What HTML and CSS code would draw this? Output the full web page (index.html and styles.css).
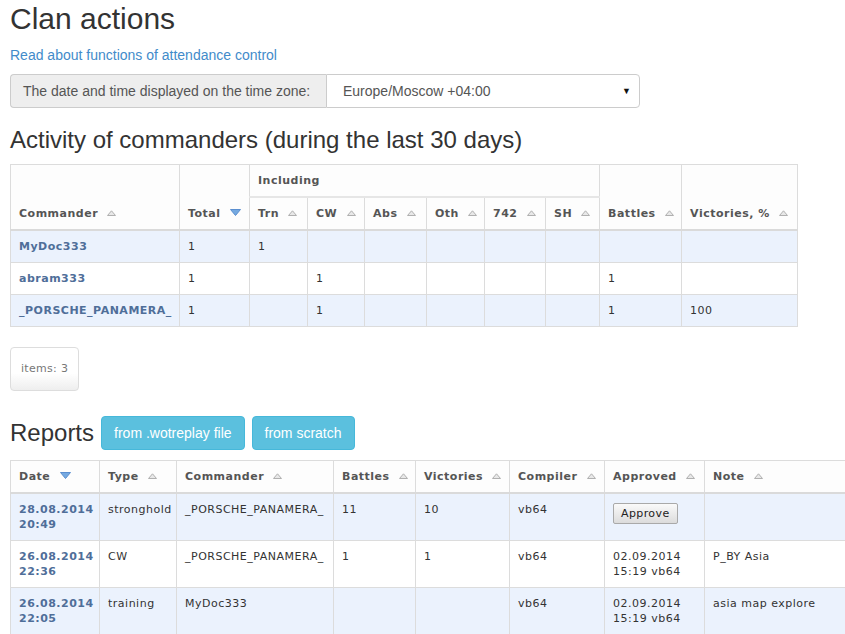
FILE: index.html
```html
<!DOCTYPE html>
<html>
<head>
<meta charset="utf-8">
<link rel="stylesheet" href="styles.css">
</head>
<body>
<div class="page">
  <h1 class="title">Clan actions</h1>
  <a class="about" href="#">Read about functions of attendance control</a>
  <div class="tz">
    <span class="tz-addon">The date and time displayed on the time zone:</span>
    <div class="tz-select"><span>Europe/Moscow +04:00</span><span class="caret">▼</span></div>
  </div>

  <h3 class="section">Activity of commanders (during the last 30 days)</h3>
  <table class="grid activity">
    <colgroup>
      <col style="width:169px"><col style="width:70px"><col style="width:58px"><col style="width:57px"><col style="width:62px"><col style="width:58px"><col style="width:61px"><col style="width:54px"><col style="width:82px"><col style="width:116px">
    </colgroup>
    <thead>
      <tr class="top">
        <th rowspan="2" class="bottom">Commander <i class="s-up"></i></th>
        <th rowspan="2" class="bottom">Total <i class="s-down"></i></th>
        <th colspan="6" class="incl">Including</th>
        <th rowspan="2" class="bottom">Battles <i class="s-up"></i></th>
        <th rowspan="2" class="bottom">Victories, % <i class="s-up"></i></th>
      </tr>
      <tr>
        <th>Trn <i class="s-up"></i></th>
        <th>CW <i class="s-up"></i></th>
        <th>Abs <i class="s-up"></i></th>
        <th>Oth <i class="s-up"></i></th>
        <th>742 <i class="s-up"></i></th>
        <th>SH <i class="s-up"></i></th>
      </tr>
    </thead>
    <tbody>
      <tr class="odd"><td><a href="#">MyDoc333</a></td><td>1</td><td>1</td><td></td><td></td><td></td><td></td><td></td><td></td><td></td></tr>
      <tr><td><a href="#">abram333</a></td><td>1</td><td></td><td>1</td><td></td><td></td><td></td><td></td><td>1</td><td></td></tr>
      <tr class="odd"><td><a href="#">_PORSCHE_PANAMERA_</a></td><td>1</td><td></td><td>1</td><td></td><td></td><td></td><td></td><td>1</td><td>100</td></tr>
    </tbody>
  </table>

  <div class="items">items: 3</div>

  <div class="reports-head">
    <h3 class="section inline">Reports</h3>
    <a class="btn" href="#">from .wotreplay file</a>
    <a class="btn" href="#">from scratch</a>
  </div>

  <table class="grid reports">
    <colgroup>
      <col style="width:89px"><col style="width:77px"><col style="width:157px"><col style="width:82px"><col style="width:94px"><col style="width:95px"><col style="width:100px"><col style="width:160px">
    </colgroup>
    <thead>
      <tr>
        <th>Date <i class="s-down"></i></th>
        <th>Type <i class="s-up"></i></th>
        <th>Commander <i class="s-up"></i></th>
        <th>Battles <i class="s-up"></i></th>
        <th>Victories <i class="s-up"></i></th>
        <th>Compiler <i class="s-up"></i></th>
        <th>Approved <i class="s-up"></i></th>
        <th>Note <i class="s-up"></i></th>
      </tr>
    </thead>
    <tbody>
      <tr class="odd"><td><a href="#">28.08.2014<br>20:49</a></td><td>stronghold</td><td>_PORSCHE_PANAMERA_</td><td>11</td><td>10</td><td>vb64</td><td><button class="approve">Approve</button></td><td></td></tr>
      <tr><td><a href="#">26.08.2014<br>22:36</a></td><td>CW</td><td>_PORSCHE_PANAMERA_</td><td>1</td><td>1</td><td>vb64</td><td>02.09.2014<br>15:19 vb64</td><td>P_BY Asia</td></tr>
      <tr class="odd"><td><a href="#">26.08.2014<br>22:05</a></td><td>training</td><td>MyDoc333</td><td></td><td></td><td>vb64</td><td>02.09.2014<br>15:19 vb64</td><td>asia map explore</td></tr>
    </tbody>
  </table>
</div>
</body>
</html>
```
FILE: styles.css
```css
html { overflow: hidden; }
body {
  margin: 0;
  font-family: "Liberation Sans", Arial, sans-serif;
  font-size: 14px;
  color: #333;
  background: #fff;
}
.page { padding: 0 10px; }
.title {
  margin: 0;
  padding-top: 2px;
  font-size: 30px;
  font-weight: normal;
  line-height: 33px;
  color: #333;
}
.about {
  display: block;
  margin-top: 10px;
  color: #428bca;
  text-decoration: none;
  font-size: 14px;
  line-height: 20px;
}
.tz {
  display: flex;
  width: 630px;
  height: 34px;
  margin-top: 9px;
  box-sizing: border-box;
}
.tz-addon {
  display: flex;
  align-items: center;
  padding: 0 12px;
  background: #eee;
  border: 1px solid #ccc;
  border-right: none;
  border-radius: 4px 0 0 4px;
  color: #555;
  width: 316px;
  box-sizing: border-box;
}
.tz-select {
  flex: 1;
  display: flex;
  align-items: center;
  justify-content: space-between;
  padding: 0 8px 0 16px;
  border: 1px solid #ccc;
  border-radius: 0 4px 4px 0;
  color: #555;
}
.caret { font-size: 9px; color: #111; }
.section {
  margin: 0;
  font-size: 24px;
  font-weight: normal;
  line-height: 26px;
  color: #333;
}
h3.section:not(.inline) { margin-top: 19px; margin-bottom: 11px; }

.grid {
  border-collapse: collapse;
  table-layout: fixed;
  font-family: "DejaVu Sans", Verdana, sans-serif;
  font-size: 11px;
  letter-spacing: 0.5px;
  color: #333;
}
.activity { width: 787px; }
.reports { width: 854px; }
.grid th, .grid td {
  border: 1px solid #dcdcdc;
  padding: 8px 8px;
  line-height: 15px;
  text-align: left;
  vertical-align: top;
  white-space: nowrap;
  overflow: hidden;
}
.grid th {
  font-weight: bold;
  color: #555;
  background: #fdfdfd;
  vertical-align: middle;
}
.grid thead tr:last-child th { border-bottom: 2px solid #dadada; }
.activity th.bottom { vertical-align: bottom; border-bottom: 2px solid #dadada; }
.activity th.incl { border-bottom: 2px solid #e6e6e6; height: 15px; }
.activity tbody td { padding: 8px 8px; height: 15px; }
.grid tr.odd td { background: #ebf2fd; }
.grid a { color: #4f6e99; font-weight: bold; text-decoration: none; }

.s-up, .s-down {
  display: inline-block;
  width: 9px;
  height: 6px;
  margin-left: 5px;
  vertical-align: 1px;
}
.s-up {
  background: url("data:image/svg+xml;utf8,<svg xmlns='http://www.w3.org/2000/svg' width='9' height='6'><path d='M0.5 5.5 L4.5 0.8 L8.5 5.5 Z' fill='%23e8e8e8' stroke='%23b0b0b0' stroke-width='1'/></svg>") no-repeat;
}
.s-down {
  background: url("data:image/svg+xml;utf8,<svg xmlns='http://www.w3.org/2000/svg' width='11' height='7'><path d='M0.5 0.5 L10.5 0.5 L5.5 6.5 Z' fill='%2375a9e0' stroke='%235b8fd0' stroke-width='1'/></svg>") no-repeat;
  width: 11px;
  height: 7px;
}

.items {
  display: inline-block;
  margin-top: 20px;
  padding: 13px 10px 14px;
  border: 1px solid #ddd;
  border-radius: 4px;
  background: linear-gradient(#fff 60%, #eee);
  font-family: "DejaVu Sans", Verdana, sans-serif;
  font-size: 11px;
  line-height: 15px;
  color: #777;
  letter-spacing: 0.3px;
}
.reports-head {
  display: flex;
  align-items: center;
  gap: 7px;
  margin-top: 25px;
  margin-bottom: 10px;
}
.reports-head .section { margin-right: 0; }
.btn {
  display: inline-block;
  padding: 6px 12px;
  line-height: 20px;
  font-size: 14px;
  color: #fff;
  background: #5bc0de;
  border: 1px solid #46b8da;
  border-radius: 4px;
  text-decoration: none;
}
.reports td { padding: 8px 8px 8px 8px; }
.reports td:first-child { padding-right: 4px; }
.approve {
  font-family: "DejaVu Sans", Verdana, sans-serif;
  font-size: 11px;
  color: #222;
  padding: 3px 7px;
  margin-top: 1px;
  border: 1px solid #a9a9a9;
  border-radius: 2px;
  background: linear-gradient(#fafafa, #dcdcdc);
  letter-spacing: 0.4px;
}
```
